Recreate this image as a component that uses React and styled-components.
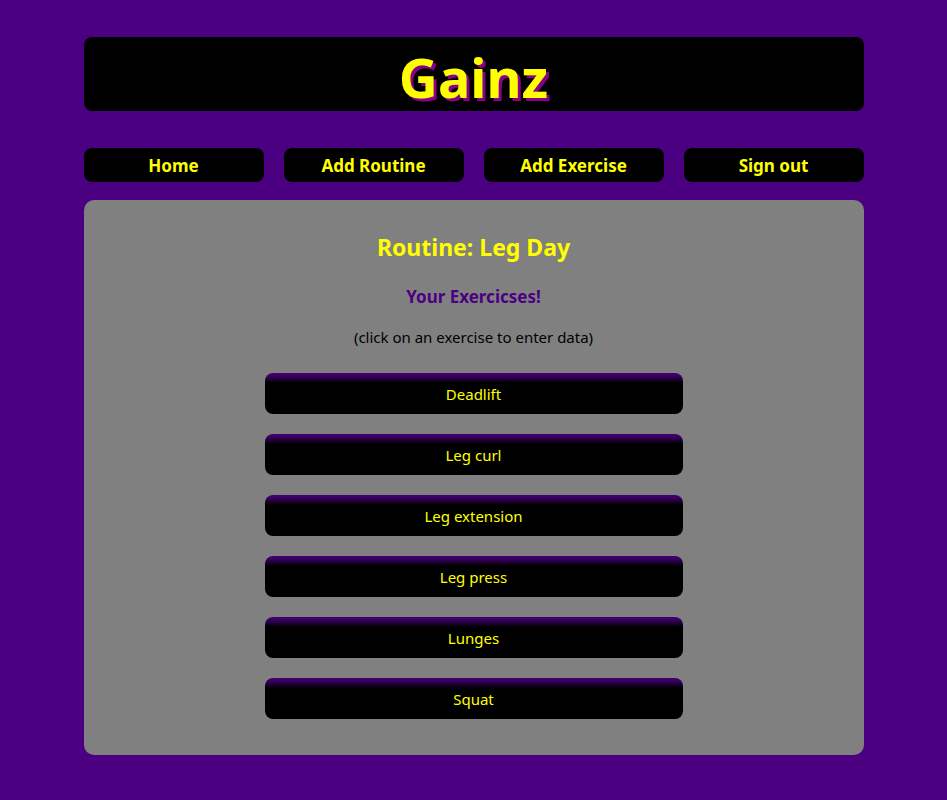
import React from 'react';
import styled, { createGlobalStyle } from 'styled-components';

const GlobalStyle = createGlobalStyle`
  body {
    margin: 0;
    background: #4b0082;
    font-family: 'Noto Sans', 'Open Sans', sans-serif;
  }
`;

const Page = styled.div`
  width: 780px;
  margin: 0 auto;
  padding: 37px 0 44px;
  display: flex;
  flex-direction: column;
`;

const Header = styled.header`
  height: 74px;
  background: #000;
  border-radius: 8px;
  display: flex;
  align-items: center;
  justify-content: center;
`;

const Title = styled.h1`
  margin: 6px 0 0;
  font-size: 54px;
  font-weight: 700;
  color: #ffff00;
  text-shadow: 3px 3px 0 #8b008b;
  line-height: 1;
`;

const Nav = styled.nav`
  margin-top: 37px;
  display: grid;
  grid-template-columns: repeat(4, 1fr);
  gap: 20px;
`;

const NavButton = styled.a`
  height: 34px;
  background: #000;
  border-radius: 8px;
  color: #ffff00;
  font-size: 17px;
  font-weight: 700;
  display: flex;
  align-items: center;
  justify-content: center;
  text-decoration: none;
`;

const Panel = styled.main`
  margin-top: 18px;
  background: #808080;
  border-radius: 10px;
  padding: 31px 0 36px;
  display: flex;
  flex-direction: column;
  align-items: center;
`;

const RoutineTitle = styled.h2`
  margin: 0;
  font-size: 23px;
  font-weight: 700;
  color: #ffff00;
`;

const SubTitle = styled.h3`
  margin: 22px 0 0;
  font-size: 17px;
  font-weight: 700;
  color: #4b0082;
`;

const Hint = styled.p`
  margin: 19px 0 0;
  font-size: 15px;
  color: #000;
`;

const List = styled.div`
  margin-top: 26px;
  width: 418px;
  display: flex;
  flex-direction: column;
  gap: 20px;
`;

const ExerciseButton = styled.button`
  height: 41px;
  border: none;
  border-radius: 8px;
  background: linear-gradient(to bottom, #3f006e 0, #3f006e 2px, #000 10px);
  color: #ffff00;
  font-family: inherit;
  font-size: 15px;
  cursor: pointer;
`;

const exercises = ['Deadlift', 'Leg curl', 'Leg extension', 'Leg press', 'Lunges', 'Squat'];
const links = ['Home', 'Add Routine', 'Add Exercise', 'Sign out'];

export default function App() {
  return (
    <>
      <GlobalStyle />
      <Page>
        <Header>
          <Title>Gainz</Title>
        </Header>
        <Nav>
          {links.map((l) => (
            <NavButton key={l} href="#">{l}</NavButton>
          ))}
        </Nav>
        <Panel>
          <RoutineTitle>Routine: Leg Day</RoutineTitle>
          <SubTitle>Your Exercicses!</SubTitle>
          <Hint>(click on an exercise to enter data)</Hint>
          <List>
            {exercises.map((e) => (
              <ExerciseButton key={e}>{e}</ExerciseButton>
            ))}
          </List>
        </Panel>
      </Page>
    </>
  );
}
